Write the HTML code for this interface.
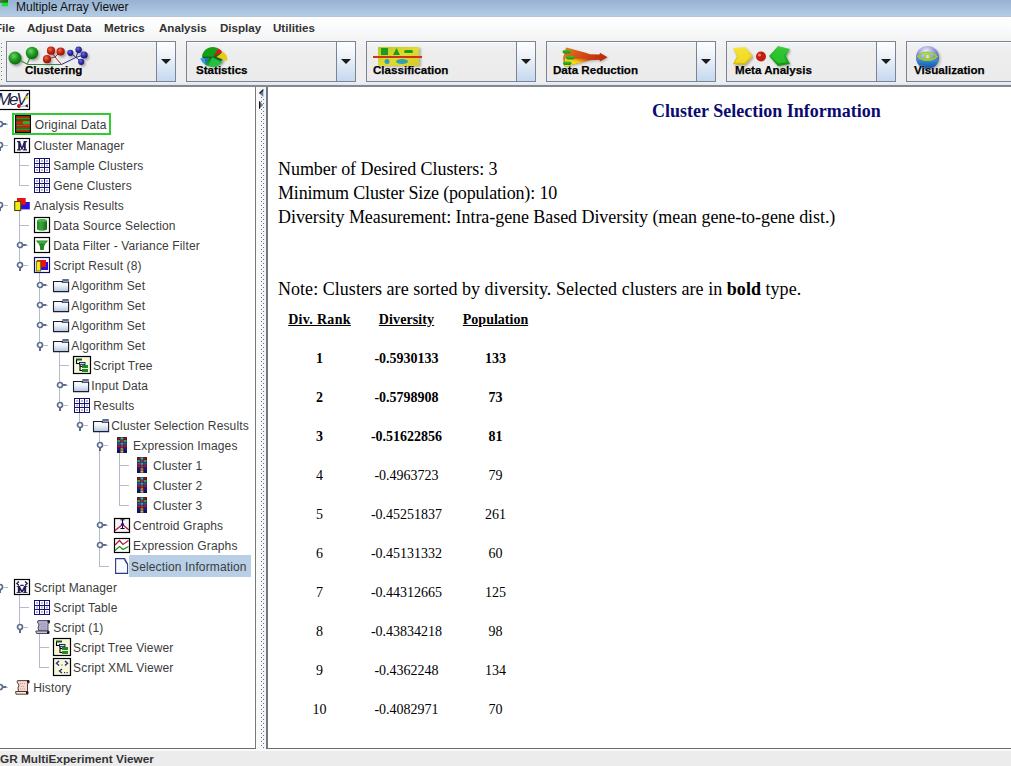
<!DOCTYPE html>
<html><head><meta charset="utf-8"><title>Multiple Array Viewer</title>
<style>
html,body{margin:0;padding:0;width:1011px;height:766px;overflow:hidden;background:#fff;position:relative;font-family:'Liberation Sans',sans-serif}
.t{position:absolute;white-space:pre}
svg{overflow:visible}
</style></head><body>
<div style="position:absolute;left:0px;top:0px;width:1011px;height:17px;background:linear-gradient(#97b2d2,#b5cee6)"></div>
<div style="position:absolute;left:0px;top:16px;width:1011px;height:1px;background:#b8c6d4"></div>
<svg style="position:absolute;left:0px;top:0px;" width="10" height="8" viewBox="0 0 10 8"><defs><linearGradient id="tb" x1="0" x2="1"><stop offset="0" stop-color="#6a6a50"/><stop offset="0.5" stop-color="#207a20"/><stop offset="1" stop-color="#106a20"/></linearGradient></defs><rect x="0" y="0" width="8" height="3" fill="url(#tb)"/><rect x="0" y="2" width="8" height="1" fill="#10a010"/><rect x="2" y="3" width="6" height="3" fill="#18e030"/><rect x="2" y="6" width="6" height="1" fill="#60d880" opacity="0.6"/></svg>
<div class="t" style="left:16px;top:1px;font-family:'Liberation Sans', sans-serif;font-size:12px;line-height:12px;font-weight:normal;color:#101010;">Multiple Array Viewer</div>
<div style="position:absolute;left:0px;top:17px;width:1011px;height:68px;background:linear-gradient(#ffffff 0px,#fafbfc 10px,#f4f4f5 22px,#efeff0 40px,#eeeeee 68px)"></div>
<div class="t" style="left:-5px;top:22px;font-family:'Liberation Sans', sans-serif;font-size:11.6px;line-height:11.6px;font-weight:bold;color:#333;">File</div>
<div class="t" style="left:27px;top:22px;font-family:'Liberation Sans', sans-serif;font-size:11.6px;line-height:11.6px;font-weight:bold;color:#333;">Adjust Data</div>
<div class="t" style="left:104px;top:22px;font-family:'Liberation Sans', sans-serif;font-size:11.6px;line-height:11.6px;font-weight:bold;color:#333;">Metrics</div>
<div class="t" style="left:159px;top:22px;font-family:'Liberation Sans', sans-serif;font-size:11.6px;line-height:11.6px;font-weight:bold;color:#333;">Analysis</div>
<div class="t" style="left:220px;top:22px;font-family:'Liberation Sans', sans-serif;font-size:11.6px;line-height:11.6px;font-weight:bold;color:#333;">Display</div>
<div class="t" style="left:273px;top:22px;font-family:'Liberation Sans', sans-serif;font-size:11.6px;line-height:11.6px;font-weight:bold;color:#333;">Utilities</div>
<div style="position:absolute;left:1px;top:43px;width:1px;height:1px;background:#7d7d7d"></div>
<div style="position:absolute;left:2px;top:44px;width:1px;height:1px;background:#ffffff"></div>
<div style="position:absolute;left:1px;top:47px;width:1px;height:1px;background:#7d7d7d"></div>
<div style="position:absolute;left:2px;top:48px;width:1px;height:1px;background:#ffffff"></div>
<div style="position:absolute;left:1px;top:51px;width:1px;height:1px;background:#7d7d7d"></div>
<div style="position:absolute;left:2px;top:52px;width:1px;height:1px;background:#ffffff"></div>
<div style="position:absolute;left:1px;top:55px;width:1px;height:1px;background:#7d7d7d"></div>
<div style="position:absolute;left:2px;top:56px;width:1px;height:1px;background:#ffffff"></div>
<div style="position:absolute;left:1px;top:59px;width:1px;height:1px;background:#7d7d7d"></div>
<div style="position:absolute;left:2px;top:60px;width:1px;height:1px;background:#ffffff"></div>
<div style="position:absolute;left:1px;top:63px;width:1px;height:1px;background:#7d7d7d"></div>
<div style="position:absolute;left:2px;top:64px;width:1px;height:1px;background:#ffffff"></div>
<div style="position:absolute;left:1px;top:67px;width:1px;height:1px;background:#7d7d7d"></div>
<div style="position:absolute;left:2px;top:68px;width:1px;height:1px;background:#ffffff"></div>
<div style="position:absolute;left:1px;top:71px;width:1px;height:1px;background:#7d7d7d"></div>
<div style="position:absolute;left:2px;top:72px;width:1px;height:1px;background:#ffffff"></div>
<div style="position:absolute;left:1px;top:75px;width:1px;height:1px;background:#7d7d7d"></div>
<div style="position:absolute;left:2px;top:76px;width:1px;height:1px;background:#ffffff"></div>
<div style="position:absolute;left:1px;top:79px;width:1px;height:1px;background:#7d7d7d"></div>
<div style="position:absolute;left:2px;top:80px;width:1px;height:1px;background:#ffffff"></div>
<div style="position:absolute;left:6px;top:41px;width:151px;height:41px;box-sizing:border-box;border:1px solid #7a8494;background:linear-gradient(#f0f3f8,#eeeeef 20%,#ececec 60%,#ebebeb)"></div>
<div style="position:absolute;left:7px;top:42px;width:148px;height:1px;background:#fcfcfd"></div>
<div style="position:absolute;left:156px;top:41px;width:20px;height:41px;box-sizing:border-box;border:1px solid #7a8494;background:linear-gradient(#fdfdfe 0%,#f2f5fa 30%,#d8e5f3 70%,#c4d8ee 100%)"></div>
<svg style="position:absolute;left:161px;top:59px;" width="10" height="5" viewBox="0 0 10 5"><path d="M0 0H10L5 5Z" fill="#1a1a1a"/></svg>
<svg style="position:absolute;left:4px;top:42px;" width="94" height="28" viewBox="0 0 94 28">
<defs>
<radialGradient id="gg" cx="40%" cy="35%" r="65%"><stop offset="0" stop-color="#70d070"/><stop offset="0.5" stop-color="#20a020"/><stop offset="1" stop-color="#0a6a0a"/></radialGradient>
<radialGradient id="rg" cx="40%" cy="35%" r="65%"><stop offset="0" stop-color="#e87050"/><stop offset="0.5" stop-color="#c82810"/><stop offset="1" stop-color="#901008"/></radialGradient>
<radialGradient id="bg" cx="40%" cy="35%" r="65%"><stop offset="0" stop-color="#7070d8"/><stop offset="0.5" stop-color="#3030b0"/><stop offset="1" stop-color="#181878"/></radialGradient>
<filter id="sh" x="-20%" y="-20%" width="140%" height="160%"><feGaussianBlur stdDeviation="1.2"/></filter>
</defs>
<g filter="url(#sh)" opacity="0.3" transform="translate(1.5,2)">
<circle cx="11" cy="16" r="6.5"/><circle cx="28" cy="11" r="6"/><circle cx="47" cy="8.7" r="4"/><circle cx="56.6" cy="9.5" r="4"/><circle cx="43" cy="17.2" r="4"/><circle cx="66.3" cy="10.8" r="3"/><circle cx="74.6" cy="7.7" r="3.2"/><circle cx="80.2" cy="12.9" r="3.5"/><circle cx="77.2" cy="19.8" r="3"/>
</g>
<path d="M11 16 L24 22.5 L57.5 22.5 M28 11 L23.5 21.5" stroke="#3a8a3a" stroke-width="1.1" fill="none"/>
<path d="M47 8.7 L51 15 L57.5 22.5 M56.6 9.5 L51 15 M43 17.2 L51 15" stroke="#a02838" stroke-width="1" fill="none"/>
<path d="M57.5 22.5 L72 15.4 L66.3 10.8 M72 15.4 L74.6 7.7 M72 15.4 L80.2 12.9 M72 15.4 L77.2 19.8" stroke="#2a2a90" stroke-width="1" fill="none"/>
<circle cx="11" cy="16" r="6.5" fill="url(#gg)"/>
<circle cx="28" cy="11" r="6.2" fill="url(#gg)"/>
<circle cx="47" cy="8.7" r="4.1" fill="url(#rg)"/>
<circle cx="56.6" cy="9.5" r="4.1" fill="url(#rg)"/>
<circle cx="43" cy="17.2" r="4.1" fill="url(#rg)"/>
<circle cx="66.3" cy="10.8" r="3.1" fill="url(#bg)"/>
<circle cx="74.6" cy="7.7" r="3.2" fill="url(#bg)"/>
<circle cx="80.2" cy="12.9" r="3.5" fill="url(#bg)"/>
<circle cx="77.2" cy="19.8" r="3.1" fill="url(#bg)"/>
</svg>
<div class="t" style="left:25px;top:64px;font-family:'Liberation Sans', sans-serif;font-size:11.6px;line-height:11.6px;font-weight:bold;color:#000;text-shadow:0 0 1px #fff,0 0 1px #fff;-webkit-text-stroke:0.25px #000">Clustering</div>
<div style="position:absolute;left:186px;top:41px;width:151px;height:41px;box-sizing:border-box;border:1px solid #7a8494;background:linear-gradient(#f0f3f8,#eeeeef 20%,#ececec 60%,#ebebeb)"></div>
<div style="position:absolute;left:187px;top:42px;width:148px;height:1px;background:#fcfcfd"></div>
<div style="position:absolute;left:336px;top:41px;width:20px;height:41px;box-sizing:border-box;border:1px solid #7a8494;background:linear-gradient(#fdfdfe 0%,#f2f5fa 30%,#d8e5f3 70%,#c4d8ee 100%)"></div>
<svg style="position:absolute;left:341px;top:59px;" width="10" height="5" viewBox="0 0 10 5"><path d="M0 0H10L5 5Z" fill="#1a1a1a"/></svg>
<svg style="position:absolute;left:196px;top:44px;" width="36" height="26" viewBox="0 0 36 26">
<defs><filter id="sh2" x="-30%" y="-30%" width="160%" height="160%"><feGaussianBlur stdDeviation="1"/></filter></defs>
<g filter="url(#sh2)" opacity="0.3" transform="translate(1,1.5)"><ellipse cx="17" cy="13" rx="11" ry="9.5"/></g>
<ellipse cx="16.5" cy="13" rx="10.2" ry="9" fill="#0e6a18"/>
<path d="M17 12.5 L6.3 12.5 A10.7 9.5 0 0 1 22.6 4.4 Z" fill="#14a014"/>
<path d="M17.6 12.6 L22.4 4.6 A10.7 9.5 0 0 1 26.3 8 Z" fill="#e01818"/>
<path d="M20.5 13 L27 8 A10.7 9.5 0 0 1 31.4 17 Z" fill="#e8cc10"/>
<path d="M13.2 14.2 L4.3 14.2 A10.7 9.5 0 0 0 9.6 20.7 Z" fill="#30a0e0"/>
<path d="M12.8 14.5 L9.6 20.7 L8.8 14.5Z" fill="#1f6fb0"/>
<path d="M16.2 13.2 L26.4 18.3 A10.7 9.5 0 0 1 11.8 21.8 Z" fill="#22c040"/>
<path d="M16.2 13.2 L11.8 21.8 A10.7 9.5 0 0 1 9 20.5Z" fill="#14a014"/>
</svg>
<div class="t" style="left:196px;top:64px;font-family:'Liberation Sans', sans-serif;font-size:11.6px;line-height:11.6px;font-weight:bold;color:#000;text-shadow:0 0 1px #fff,0 0 1px #fff;-webkit-text-stroke:0.25px #000">Statistics</div>
<div style="position:absolute;left:366px;top:41px;width:151px;height:41px;box-sizing:border-box;border:1px solid #7a8494;background:linear-gradient(#f0f3f8,#eeeeef 20%,#ececec 60%,#ebebeb)"></div>
<div style="position:absolute;left:367px;top:42px;width:148px;height:1px;background:#fcfcfd"></div>
<div style="position:absolute;left:516px;top:41px;width:20px;height:41px;box-sizing:border-box;border:1px solid #7a8494;background:linear-gradient(#fdfdfe 0%,#f2f5fa 30%,#d8e5f3 70%,#c4d8ee 100%)"></div>
<svg style="position:absolute;left:521px;top:59px;" width="10" height="5" viewBox="0 0 10 5"><path d="M0 0H10L5 5Z" fill="#1a1a1a"/></svg>
<svg style="position:absolute;left:371px;top:45px;" width="54" height="23" viewBox="0 0 54 23">
<defs><linearGradient id="yl" x1="0" y1="0" x2="1" y2="1"><stop offset="0" stop-color="#b8c820"/><stop offset="0.5" stop-color="#e0dc30"/><stop offset="1" stop-color="#d8c828"/></linearGradient>
<filter id="sh3"><feGaussianBlur stdDeviation="0.8"/></filter></defs>
<rect x="9" y="3" width="41" height="19" fill="#000" opacity="0.25" filter="url(#sh3)"/>
<rect x="7" y="2" width="41" height="19" fill="url(#yl)"/>
<rect x="10" y="3" width="7" height="7" fill="#1f9a1f"/>
<path d="M22 10 L25.5 3 L29 10Z" fill="#1f9a1f"/>
<rect x="33" y="5" width="9" height="3" rx="1.5" fill="#1f9a1f"/>
<rect x="2" y="11" width="49" height="2" fill="#c83818"/>
<circle cx="16" cy="16.5" r="2.5" fill="#30a0b8"/>
<ellipse cx="31" cy="16.5" rx="6" ry="2.5" fill="#30a0b8"/>
</svg>
<div class="t" style="left:373px;top:64px;font-family:'Liberation Sans', sans-serif;font-size:11.6px;line-height:11.6px;font-weight:bold;color:#000;text-shadow:0 0 1px #fff,0 0 1px #fff;-webkit-text-stroke:0.25px #000">Classification</div>
<div style="position:absolute;left:546px;top:41px;width:151px;height:41px;box-sizing:border-box;border:1px solid #7a8494;background:linear-gradient(#f0f3f8,#eeeeef 20%,#ececec 60%,#ebebeb)"></div>
<div style="position:absolute;left:547px;top:42px;width:148px;height:1px;background:#fcfcfd"></div>
<div style="position:absolute;left:696px;top:41px;width:20px;height:41px;box-sizing:border-box;border:1px solid #7a8494;background:linear-gradient(#fdfdfe 0%,#f2f5fa 30%,#d8e5f3 70%,#c4d8ee 100%)"></div>
<svg style="position:absolute;left:701px;top:59px;" width="10" height="5" viewBox="0 0 10 5"><path d="M0 0H10L5 5Z" fill="#1a1a1a"/></svg>
<svg style="position:absolute;left:560px;top:45px;" width="52" height="24" viewBox="0 0 52 24">
<defs><linearGradient id="dr" x1="0" y1="0" x2="1" y2="0.3"><stop offset="0" stop-color="#d89018"/><stop offset="0.35" stop-color="#d85818"/><stop offset="1" stop-color="#c02808"/></linearGradient>
<linearGradient id="dy" x1="0" y1="1" x2="0.8" y2="0"><stop offset="0" stop-color="#f8f020"/><stop offset="0.6" stop-color="#f0d010"/><stop offset="1" stop-color="#e8a010" stop-opacity="0"/></linearGradient>
<linearGradient id="pg" x1="0" y1="0" x2="0" y2="1"><stop offset="0" stop-color="#40c030"/><stop offset="1" stop-color="#1a8a18"/></linearGradient>
<filter id="sh4"><feGaussianBlur stdDeviation="0.9"/></filter></defs>
<path d="M6 2.5 Q20 6 30 9.2 L39.5 9.5 L40 7.8 L47.5 12.3 L40 16.5 L39.5 14.8 L30 15.2 Q18 18 4.5 22 L3 13Z" fill="#000" opacity="0.22" filter="url(#sh4)" transform="translate(1,1.2)"/>
<path d="M6 2.5 Q20 6 30 9.2 L39.5 9.5 L40 7.8 L47.5 12.3 L40 16.5 L39.5 14.8 L30 15.2 Q18 18 4.5 22 L3 13Z" fill="url(#dr)"/>
<path d="M4.5 22 Q18 18 30 15.2 L26 13.5 Q14 14 5 13Z" fill="url(#dy)"/>
<rect x="2.5" y="5" width="8.5" height="3.6" rx="1.8" fill="url(#pg)"/>
<rect x="6" y="11" width="8.5" height="3.6" rx="1.8" fill="url(#pg)"/>
<rect x="3" y="16.5" width="8.5" height="3.6" rx="1.8" fill="url(#pg)"/>
</svg>
<div class="t" style="left:553px;top:64px;font-family:'Liberation Sans', sans-serif;font-size:11.6px;line-height:11.6px;font-weight:bold;color:#000;text-shadow:0 0 1px #fff,0 0 1px #fff;-webkit-text-stroke:0.25px #000">Data Reduction</div>
<div style="position:absolute;left:726px;top:41px;width:151px;height:41px;box-sizing:border-box;border:1px solid #7a8494;background:linear-gradient(#f0f3f8,#eeeeef 20%,#ececec 60%,#ebebeb)"></div>
<div style="position:absolute;left:727px;top:42px;width:148px;height:1px;background:#fcfcfd"></div>
<div style="position:absolute;left:876px;top:41px;width:20px;height:41px;box-sizing:border-box;border:1px solid #7a8494;background:linear-gradient(#fdfdfe 0%,#f2f5fa 30%,#d8e5f3 70%,#c4d8ee 100%)"></div>
<svg style="position:absolute;left:881px;top:59px;" width="10" height="5" viewBox="0 0 10 5"><path d="M0 0H10L5 5Z" fill="#1a1a1a"/></svg>
<svg style="position:absolute;left:731px;top:44px;" width="62" height="24" viewBox="0 0 62 24">
<defs><filter id="sh5"><feGaussianBlur stdDeviation="0.9"/></filter>
<linearGradient id="ya" x1="0" y1="0" x2="0" y2="1"><stop offset="0" stop-color="#f8e840"/><stop offset="1" stop-color="#d8b808"/></linearGradient>
<linearGradient id="ga" x1="0" y1="0" x2="0" y2="1"><stop offset="0" stop-color="#40d040"/><stop offset="1" stop-color="#109010"/></linearGradient></defs>
<g opacity="0.3" filter="url(#sh5)" transform="translate(1,1.5)"><path d="M2 4 L14 3 L22 12 L14 21 L2 20 L6 12Z"/><path d="M59 5 L47 2 L38 12 L47 22 L59 20 L55 12Z"/></g>
<path d="M2 4 L14 3 L22 12 L14 21 L2 20 L6 12Z" fill="url(#ya)"/>
<path d="M4 5.5 L13.5 5 L19.5 12 L13.5 19 L4 18.5 L7.5 12Z" fill="#f4e030" opacity="0.8"/>
<circle cx="30" cy="12.5" r="5" fill="#c02010"/>
<circle cx="28.5" cy="11" r="1.6" fill="#f08060"/>
<path d="M59 5 L47 2 L38 12 L47 22 L59 20 L55 12Z" fill="url(#ga)"/>
<path d="M56 6.5 L47 4.5 L40.5 12 L47 19.5 L56 18 L52.5 12Z" fill="#30c830" opacity="0.8"/>
</svg>
<div class="t" style="left:735px;top:64px;font-family:'Liberation Sans', sans-serif;font-size:11.6px;line-height:11.6px;font-weight:bold;color:#000;text-shadow:0 0 1px #fff,0 0 1px #fff;-webkit-text-stroke:0.25px #000">Meta Analysis</div>
<div style="position:absolute;left:906px;top:41px;width:201px;height:41px;box-sizing:border-box;border:1px solid #7a8494;background:linear-gradient(#f0f3f8,#eeeeef 20%,#ececec 60%,#ebebeb)"></div>
<div style="position:absolute;left:907px;top:42px;width:198px;height:1px;background:#fcfcfd"></div>
<svg style="position:absolute;left:914px;top:44px;" width="28" height="26" viewBox="0 0 28 26">
<defs><radialGradient id="gl" cx="45%" cy="25%" r="70%"><stop offset="0" stop-color="#f4f4fc"/><stop offset="0.45" stop-color="#a0a0e0"/><stop offset="1" stop-color="#3050b8"/></radialGradient>
<linearGradient id="gb" x1="0" y1="0" x2="0" y2="1"><stop offset="0" stop-color="#3a90e0"/><stop offset="1" stop-color="#1050a0"/></linearGradient>
<filter id="sh6"><feGaussianBlur stdDeviation="1"/></filter></defs>
<circle cx="15" cy="15" r="11.5" fill="#000" opacity="0.25" filter="url(#sh6)"/>
<circle cx="13.5" cy="13.5" r="11.5" fill="url(#gl)"/>
<path d="M2.3 15.5 A11.5 11.5 0 0 0 24.7 15.5 Z" fill="url(#gb)"/>
<path d="M4 12.5 Q13.5 4 23 12.5 Q13.5 20 4 12.5Z" fill="none" stroke="#98d020" stroke-width="1.6"/>
<circle cx="13.5" cy="12.5" r="2.6" fill="#c8d8f0" stroke="#98d020" stroke-width="1.4"/>
</svg>
<div class="t" style="left:914px;top:64px;font-family:'Liberation Sans', sans-serif;font-size:11.6px;line-height:11.6px;font-weight:bold;color:#000;text-shadow:0 0 1px #fff,0 0 1px #fff;-webkit-text-stroke:0.25px #000">Visualization</div>
<div style="position:absolute;left:0px;top:82px;width:1011px;height:3px;background:linear-gradient(#eaf0f6,#dfe6ee)"></div>
<div style="position:absolute;left:0px;top:85px;width:1011px;height:2px;background:#85888c"></div>
<div style="position:absolute;left:0px;top:87px;width:255px;height:661px;background:#fff"></div>
<div style="position:absolute;left:255px;top:87px;width:1px;height:661px;background:#7a7a7a"></div>
<div style="position:absolute;left:0px;top:748px;width:256px;height:1px;background:#6e6e6e"></div>
<div style="position:absolute;left:256px;top:87px;width:10px;height:662px;background:linear-gradient(90deg,#fafafa,#f0f3f8)"></div>
<svg style="position:absolute;left:256px;top:87px;" width="10" height="662" viewBox="0 0 10 662"><rect x="7" y="12" width="1" height="1" fill="#6a6e76"/><rect x="7" y="16" width="1" height="1" fill="#6a6e76"/><rect x="7" y="20" width="1" height="1" fill="#6a6e76"/><rect x="7" y="24" width="1" height="1" fill="#6a6e76"/><rect x="7" y="28" width="1" height="1" fill="#6a6e76"/><rect x="7" y="32" width="1" height="1" fill="#6a6e76"/><rect x="7" y="36" width="1" height="1" fill="#6a6e76"/><rect x="7" y="40" width="1" height="1" fill="#6a6e76"/><rect x="7" y="44" width="1" height="1" fill="#6a6e76"/><rect x="7" y="48" width="1" height="1" fill="#6a6e76"/><rect x="7" y="52" width="1" height="1" fill="#6a6e76"/><rect x="7" y="56" width="1" height="1" fill="#6a6e76"/><rect x="7" y="60" width="1" height="1" fill="#6a6e76"/><rect x="7" y="64" width="1" height="1" fill="#6a6e76"/><rect x="7" y="68" width="1" height="1" fill="#6a6e76"/><rect x="7" y="72" width="1" height="1" fill="#6a6e76"/><rect x="7" y="76" width="1" height="1" fill="#6a6e76"/><rect x="7" y="80" width="1" height="1" fill="#6a6e76"/><rect x="7" y="84" width="1" height="1" fill="#6a6e76"/><rect x="7" y="88" width="1" height="1" fill="#6a6e76"/><rect x="7" y="92" width="1" height="1" fill="#6a6e76"/><rect x="7" y="96" width="1" height="1" fill="#6a6e76"/><rect x="7" y="100" width="1" height="1" fill="#6a6e76"/><rect x="7" y="104" width="1" height="1" fill="#6a6e76"/><rect x="7" y="108" width="1" height="1" fill="#6a6e76"/><rect x="7" y="112" width="1" height="1" fill="#6a6e76"/><rect x="7" y="116" width="1" height="1" fill="#6a6e76"/><rect x="7" y="120" width="1" height="1" fill="#6a6e76"/><rect x="7" y="124" width="1" height="1" fill="#6a6e76"/><rect x="7" y="128" width="1" height="1" fill="#6a6e76"/><rect x="7" y="132" width="1" height="1" fill="#6a6e76"/><rect x="7" y="136" width="1" height="1" fill="#6a6e76"/><rect x="7" y="140" width="1" height="1" fill="#6a6e76"/><rect x="7" y="144" width="1" height="1" fill="#6a6e76"/><rect x="7" y="148" width="1" height="1" fill="#6a6e76"/><rect x="7" y="152" width="1" height="1" fill="#6a6e76"/><rect x="7" y="156" width="1" height="1" fill="#6a6e76"/><rect x="7" y="160" width="1" height="1" fill="#6a6e76"/><rect x="7" y="164" width="1" height="1" fill="#6a6e76"/><rect x="7" y="168" width="1" height="1" fill="#6a6e76"/><rect x="7" y="172" width="1" height="1" fill="#6a6e76"/><rect x="7" y="176" width="1" height="1" fill="#6a6e76"/><rect x="7" y="180" width="1" height="1" fill="#6a6e76"/><rect x="7" y="184" width="1" height="1" fill="#6a6e76"/><rect x="7" y="188" width="1" height="1" fill="#6a6e76"/><rect x="7" y="192" width="1" height="1" fill="#6a6e76"/><rect x="7" y="196" width="1" height="1" fill="#6a6e76"/><rect x="7" y="200" width="1" height="1" fill="#6a6e76"/><rect x="7" y="204" width="1" height="1" fill="#6a6e76"/><rect x="7" y="208" width="1" height="1" fill="#6a6e76"/><rect x="7" y="212" width="1" height="1" fill="#6a6e76"/><rect x="7" y="216" width="1" height="1" fill="#6a6e76"/><rect x="7" y="220" width="1" height="1" fill="#6a6e76"/><rect x="7" y="224" width="1" height="1" fill="#6a6e76"/><rect x="7" y="228" width="1" height="1" fill="#6a6e76"/><rect x="7" y="232" width="1" height="1" fill="#6a6e76"/><rect x="7" y="236" width="1" height="1" fill="#6a6e76"/><rect x="7" y="240" width="1" height="1" fill="#6a6e76"/><rect x="7" y="244" width="1" height="1" fill="#6a6e76"/><rect x="7" y="248" width="1" height="1" fill="#6a6e76"/><rect x="7" y="252" width="1" height="1" fill="#6a6e76"/><rect x="7" y="256" width="1" height="1" fill="#6a6e76"/><rect x="7" y="260" width="1" height="1" fill="#6a6e76"/><rect x="7" y="264" width="1" height="1" fill="#6a6e76"/><rect x="7" y="268" width="1" height="1" fill="#6a6e76"/><rect x="7" y="272" width="1" height="1" fill="#6a6e76"/><rect x="7" y="276" width="1" height="1" fill="#6a6e76"/><rect x="7" y="280" width="1" height="1" fill="#6a6e76"/><rect x="7" y="284" width="1" height="1" fill="#6a6e76"/><rect x="7" y="288" width="1" height="1" fill="#6a6e76"/><rect x="7" y="292" width="1" height="1" fill="#6a6e76"/><rect x="7" y="296" width="1" height="1" fill="#6a6e76"/><rect x="7" y="300" width="1" height="1" fill="#6a6e76"/><rect x="7" y="304" width="1" height="1" fill="#6a6e76"/><rect x="7" y="308" width="1" height="1" fill="#6a6e76"/><rect x="7" y="312" width="1" height="1" fill="#6a6e76"/><rect x="7" y="316" width="1" height="1" fill="#6a6e76"/><rect x="7" y="320" width="1" height="1" fill="#6a6e76"/><rect x="7" y="324" width="1" height="1" fill="#6a6e76"/><rect x="7" y="328" width="1" height="1" fill="#6a6e76"/><rect x="7" y="332" width="1" height="1" fill="#6a6e76"/><rect x="7" y="336" width="1" height="1" fill="#6a6e76"/><rect x="7" y="340" width="1" height="1" fill="#6a6e76"/><rect x="7" y="344" width="1" height="1" fill="#6a6e76"/><rect x="7" y="348" width="1" height="1" fill="#6a6e76"/><rect x="7" y="352" width="1" height="1" fill="#6a6e76"/><rect x="7" y="356" width="1" height="1" fill="#6a6e76"/><rect x="7" y="360" width="1" height="1" fill="#6a6e76"/><rect x="7" y="364" width="1" height="1" fill="#6a6e76"/><rect x="7" y="368" width="1" height="1" fill="#6a6e76"/><rect x="7" y="372" width="1" height="1" fill="#6a6e76"/><rect x="7" y="376" width="1" height="1" fill="#6a6e76"/><rect x="7" y="380" width="1" height="1" fill="#6a6e76"/><rect x="7" y="384" width="1" height="1" fill="#6a6e76"/><rect x="7" y="388" width="1" height="1" fill="#6a6e76"/><rect x="7" y="392" width="1" height="1" fill="#6a6e76"/><rect x="7" y="396" width="1" height="1" fill="#6a6e76"/><rect x="7" y="400" width="1" height="1" fill="#6a6e76"/><rect x="7" y="404" width="1" height="1" fill="#6a6e76"/><rect x="7" y="408" width="1" height="1" fill="#6a6e76"/><rect x="7" y="412" width="1" height="1" fill="#6a6e76"/><rect x="7" y="416" width="1" height="1" fill="#6a6e76"/><rect x="7" y="420" width="1" height="1" fill="#6a6e76"/><rect x="7" y="424" width="1" height="1" fill="#6a6e76"/><rect x="7" y="428" width="1" height="1" fill="#6a6e76"/><rect x="7" y="432" width="1" height="1" fill="#6a6e76"/><rect x="7" y="436" width="1" height="1" fill="#6a6e76"/><rect x="7" y="440" width="1" height="1" fill="#6a6e76"/><rect x="7" y="444" width="1" height="1" fill="#6a6e76"/><rect x="7" y="448" width="1" height="1" fill="#6a6e76"/><rect x="7" y="452" width="1" height="1" fill="#6a6e76"/><rect x="7" y="456" width="1" height="1" fill="#6a6e76"/><rect x="7" y="460" width="1" height="1" fill="#6a6e76"/><rect x="7" y="464" width="1" height="1" fill="#6a6e76"/><rect x="7" y="468" width="1" height="1" fill="#6a6e76"/><rect x="7" y="472" width="1" height="1" fill="#6a6e76"/><rect x="7" y="476" width="1" height="1" fill="#6a6e76"/><rect x="7" y="480" width="1" height="1" fill="#6a6e76"/><rect x="7" y="484" width="1" height="1" fill="#6a6e76"/><rect x="7" y="488" width="1" height="1" fill="#6a6e76"/><rect x="7" y="492" width="1" height="1" fill="#6a6e76"/><rect x="7" y="496" width="1" height="1" fill="#6a6e76"/><rect x="7" y="500" width="1" height="1" fill="#6a6e76"/><rect x="7" y="504" width="1" height="1" fill="#6a6e76"/><rect x="7" y="508" width="1" height="1" fill="#6a6e76"/><rect x="7" y="512" width="1" height="1" fill="#6a6e76"/><rect x="7" y="516" width="1" height="1" fill="#6a6e76"/><rect x="7" y="520" width="1" height="1" fill="#6a6e76"/><rect x="7" y="524" width="1" height="1" fill="#6a6e76"/><rect x="7" y="528" width="1" height="1" fill="#6a6e76"/><rect x="7" y="532" width="1" height="1" fill="#6a6e76"/><rect x="7" y="536" width="1" height="1" fill="#6a6e76"/><rect x="7" y="540" width="1" height="1" fill="#6a6e76"/><rect x="7" y="544" width="1" height="1" fill="#6a6e76"/><rect x="7" y="548" width="1" height="1" fill="#6a6e76"/><rect x="7" y="552" width="1" height="1" fill="#6a6e76"/><rect x="7" y="556" width="1" height="1" fill="#6a6e76"/><rect x="7" y="560" width="1" height="1" fill="#6a6e76"/><rect x="7" y="564" width="1" height="1" fill="#6a6e76"/><rect x="7" y="568" width="1" height="1" fill="#6a6e76"/><rect x="7" y="572" width="1" height="1" fill="#6a6e76"/><rect x="7" y="576" width="1" height="1" fill="#6a6e76"/><rect x="7" y="580" width="1" height="1" fill="#6a6e76"/><rect x="7" y="584" width="1" height="1" fill="#6a6e76"/><rect x="7" y="588" width="1" height="1" fill="#6a6e76"/><rect x="7" y="592" width="1" height="1" fill="#6a6e76"/><rect x="7" y="596" width="1" height="1" fill="#6a6e76"/><rect x="7" y="600" width="1" height="1" fill="#6a6e76"/><rect x="7" y="604" width="1" height="1" fill="#6a6e76"/><rect x="7" y="608" width="1" height="1" fill="#6a6e76"/><rect x="7" y="612" width="1" height="1" fill="#6a6e76"/><rect x="7" y="616" width="1" height="1" fill="#6a6e76"/><rect x="7" y="620" width="1" height="1" fill="#6a6e76"/><rect x="7" y="624" width="1" height="1" fill="#6a6e76"/><rect x="7" y="628" width="1" height="1" fill="#6a6e76"/><rect x="7" y="632" width="1" height="1" fill="#6a6e76"/><rect x="7" y="636" width="1" height="1" fill="#6a6e76"/><rect x="7" y="640" width="1" height="1" fill="#6a6e76"/><rect x="7" y="644" width="1" height="1" fill="#6a6e76"/><rect x="7" y="648" width="1" height="1" fill="#6a6e76"/><rect x="7" y="652" width="1" height="1" fill="#6a6e76"/><rect x="7" y="656" width="1" height="1" fill="#6a6e76"/><rect x="7" y="660" width="1" height="1" fill="#6a6e76"/><rect x="5" y="10" width="1" height="1" fill="#6a6e76"/><rect x="5" y="14" width="1" height="1" fill="#6a6e76"/><rect x="5" y="18" width="1" height="1" fill="#6a6e76"/><rect x="5" y="22" width="1" height="1" fill="#6a6e76"/><rect x="5" y="26" width="1" height="1" fill="#6a6e76"/><rect x="5" y="30" width="1" height="1" fill="#6a6e76"/><rect x="5" y="34" width="1" height="1" fill="#6a6e76"/><rect x="5" y="38" width="1" height="1" fill="#6a6e76"/><rect x="5" y="42" width="1" height="1" fill="#6a6e76"/><rect x="5" y="46" width="1" height="1" fill="#6a6e76"/><rect x="5" y="50" width="1" height="1" fill="#6a6e76"/><rect x="5" y="54" width="1" height="1" fill="#6a6e76"/><rect x="5" y="58" width="1" height="1" fill="#6a6e76"/><rect x="5" y="62" width="1" height="1" fill="#6a6e76"/><rect x="5" y="66" width="1" height="1" fill="#6a6e76"/><rect x="5" y="70" width="1" height="1" fill="#6a6e76"/><rect x="5" y="74" width="1" height="1" fill="#6a6e76"/><rect x="5" y="78" width="1" height="1" fill="#6a6e76"/><rect x="5" y="82" width="1" height="1" fill="#6a6e76"/><rect x="5" y="86" width="1" height="1" fill="#6a6e76"/><rect x="5" y="90" width="1" height="1" fill="#6a6e76"/><rect x="5" y="94" width="1" height="1" fill="#6a6e76"/><rect x="5" y="98" width="1" height="1" fill="#6a6e76"/><rect x="5" y="102" width="1" height="1" fill="#6a6e76"/><rect x="5" y="106" width="1" height="1" fill="#6a6e76"/><rect x="5" y="110" width="1" height="1" fill="#6a6e76"/><rect x="5" y="114" width="1" height="1" fill="#6a6e76"/><rect x="5" y="118" width="1" height="1" fill="#6a6e76"/><rect x="5" y="122" width="1" height="1" fill="#6a6e76"/><rect x="5" y="126" width="1" height="1" fill="#6a6e76"/><rect x="5" y="130" width="1" height="1" fill="#6a6e76"/><rect x="5" y="134" width="1" height="1" fill="#6a6e76"/><rect x="5" y="138" width="1" height="1" fill="#6a6e76"/><rect x="5" y="142" width="1" height="1" fill="#6a6e76"/><rect x="5" y="146" width="1" height="1" fill="#6a6e76"/><rect x="5" y="150" width="1" height="1" fill="#6a6e76"/><rect x="5" y="154" width="1" height="1" fill="#6a6e76"/><rect x="5" y="158" width="1" height="1" fill="#6a6e76"/><rect x="5" y="162" width="1" height="1" fill="#6a6e76"/><rect x="5" y="166" width="1" height="1" fill="#6a6e76"/><rect x="5" y="170" width="1" height="1" fill="#6a6e76"/><rect x="5" y="174" width="1" height="1" fill="#6a6e76"/><rect x="5" y="178" width="1" height="1" fill="#6a6e76"/><rect x="5" y="182" width="1" height="1" fill="#6a6e76"/><rect x="5" y="186" width="1" height="1" fill="#6a6e76"/><rect x="5" y="190" width="1" height="1" fill="#6a6e76"/><rect x="5" y="194" width="1" height="1" fill="#6a6e76"/><rect x="5" y="198" width="1" height="1" fill="#6a6e76"/><rect x="5" y="202" width="1" height="1" fill="#6a6e76"/><rect x="5" y="206" width="1" height="1" fill="#6a6e76"/><rect x="5" y="210" width="1" height="1" fill="#6a6e76"/><rect x="5" y="214" width="1" height="1" fill="#6a6e76"/><rect x="5" y="218" width="1" height="1" fill="#6a6e76"/><rect x="5" y="222" width="1" height="1" fill="#6a6e76"/><rect x="5" y="226" width="1" height="1" fill="#6a6e76"/><rect x="5" y="230" width="1" height="1" fill="#6a6e76"/><rect x="5" y="234" width="1" height="1" fill="#6a6e76"/><rect x="5" y="238" width="1" height="1" fill="#6a6e76"/><rect x="5" y="242" width="1" height="1" fill="#6a6e76"/><rect x="5" y="246" width="1" height="1" fill="#6a6e76"/><rect x="5" y="250" width="1" height="1" fill="#6a6e76"/><rect x="5" y="254" width="1" height="1" fill="#6a6e76"/><rect x="5" y="258" width="1" height="1" fill="#6a6e76"/><rect x="5" y="262" width="1" height="1" fill="#6a6e76"/><rect x="5" y="266" width="1" height="1" fill="#6a6e76"/><rect x="5" y="270" width="1" height="1" fill="#6a6e76"/><rect x="5" y="274" width="1" height="1" fill="#6a6e76"/><rect x="5" y="278" width="1" height="1" fill="#6a6e76"/><rect x="5" y="282" width="1" height="1" fill="#6a6e76"/><rect x="5" y="286" width="1" height="1" fill="#6a6e76"/><rect x="5" y="290" width="1" height="1" fill="#6a6e76"/><rect x="5" y="294" width="1" height="1" fill="#6a6e76"/><rect x="5" y="298" width="1" height="1" fill="#6a6e76"/><rect x="5" y="302" width="1" height="1" fill="#6a6e76"/><rect x="5" y="306" width="1" height="1" fill="#6a6e76"/><rect x="5" y="310" width="1" height="1" fill="#6a6e76"/><rect x="5" y="314" width="1" height="1" fill="#6a6e76"/><rect x="5" y="318" width="1" height="1" fill="#6a6e76"/><rect x="5" y="322" width="1" height="1" fill="#6a6e76"/><rect x="5" y="326" width="1" height="1" fill="#6a6e76"/><rect x="5" y="330" width="1" height="1" fill="#6a6e76"/><rect x="5" y="334" width="1" height="1" fill="#6a6e76"/><rect x="5" y="338" width="1" height="1" fill="#6a6e76"/><rect x="5" y="342" width="1" height="1" fill="#6a6e76"/><rect x="5" y="346" width="1" height="1" fill="#6a6e76"/><rect x="5" y="350" width="1" height="1" fill="#6a6e76"/><rect x="5" y="354" width="1" height="1" fill="#6a6e76"/><rect x="5" y="358" width="1" height="1" fill="#6a6e76"/><rect x="5" y="362" width="1" height="1" fill="#6a6e76"/><rect x="5" y="366" width="1" height="1" fill="#6a6e76"/><rect x="5" y="370" width="1" height="1" fill="#6a6e76"/><rect x="5" y="374" width="1" height="1" fill="#6a6e76"/><rect x="5" y="378" width="1" height="1" fill="#6a6e76"/><rect x="5" y="382" width="1" height="1" fill="#6a6e76"/><rect x="5" y="386" width="1" height="1" fill="#6a6e76"/><rect x="5" y="390" width="1" height="1" fill="#6a6e76"/><rect x="5" y="394" width="1" height="1" fill="#6a6e76"/><rect x="5" y="398" width="1" height="1" fill="#6a6e76"/><rect x="5" y="402" width="1" height="1" fill="#6a6e76"/><rect x="5" y="406" width="1" height="1" fill="#6a6e76"/><rect x="5" y="410" width="1" height="1" fill="#6a6e76"/><rect x="5" y="414" width="1" height="1" fill="#6a6e76"/><rect x="5" y="418" width="1" height="1" fill="#6a6e76"/><rect x="5" y="422" width="1" height="1" fill="#6a6e76"/><rect x="5" y="426" width="1" height="1" fill="#6a6e76"/><rect x="5" y="430" width="1" height="1" fill="#6a6e76"/><rect x="5" y="434" width="1" height="1" fill="#6a6e76"/><rect x="5" y="438" width="1" height="1" fill="#6a6e76"/><rect x="5" y="442" width="1" height="1" fill="#6a6e76"/><rect x="5" y="446" width="1" height="1" fill="#6a6e76"/><rect x="5" y="450" width="1" height="1" fill="#6a6e76"/><rect x="5" y="454" width="1" height="1" fill="#6a6e76"/><rect x="5" y="458" width="1" height="1" fill="#6a6e76"/><rect x="5" y="462" width="1" height="1" fill="#6a6e76"/><rect x="5" y="466" width="1" height="1" fill="#6a6e76"/><rect x="5" y="470" width="1" height="1" fill="#6a6e76"/><rect x="5" y="474" width="1" height="1" fill="#6a6e76"/><rect x="5" y="478" width="1" height="1" fill="#6a6e76"/><rect x="5" y="482" width="1" height="1" fill="#6a6e76"/><rect x="5" y="486" width="1" height="1" fill="#6a6e76"/><rect x="5" y="490" width="1" height="1" fill="#6a6e76"/><rect x="5" y="494" width="1" height="1" fill="#6a6e76"/><rect x="5" y="498" width="1" height="1" fill="#6a6e76"/><rect x="5" y="502" width="1" height="1" fill="#6a6e76"/><rect x="5" y="506" width="1" height="1" fill="#6a6e76"/><rect x="5" y="510" width="1" height="1" fill="#6a6e76"/><rect x="5" y="514" width="1" height="1" fill="#6a6e76"/><rect x="5" y="518" width="1" height="1" fill="#6a6e76"/><rect x="5" y="522" width="1" height="1" fill="#6a6e76"/><rect x="5" y="526" width="1" height="1" fill="#6a6e76"/><rect x="5" y="530" width="1" height="1" fill="#6a6e76"/><rect x="5" y="534" width="1" height="1" fill="#6a6e76"/><rect x="5" y="538" width="1" height="1" fill="#6a6e76"/><rect x="5" y="542" width="1" height="1" fill="#6a6e76"/><rect x="5" y="546" width="1" height="1" fill="#6a6e76"/><rect x="5" y="550" width="1" height="1" fill="#6a6e76"/><rect x="5" y="554" width="1" height="1" fill="#6a6e76"/><rect x="5" y="558" width="1" height="1" fill="#6a6e76"/><rect x="5" y="562" width="1" height="1" fill="#6a6e76"/><rect x="5" y="566" width="1" height="1" fill="#6a6e76"/><rect x="5" y="570" width="1" height="1" fill="#6a6e76"/><rect x="5" y="574" width="1" height="1" fill="#6a6e76"/><rect x="5" y="578" width="1" height="1" fill="#6a6e76"/><rect x="5" y="582" width="1" height="1" fill="#6a6e76"/><rect x="5" y="586" width="1" height="1" fill="#6a6e76"/><rect x="5" y="590" width="1" height="1" fill="#6a6e76"/><rect x="5" y="594" width="1" height="1" fill="#6a6e76"/><rect x="5" y="598" width="1" height="1" fill="#6a6e76"/><rect x="5" y="602" width="1" height="1" fill="#6a6e76"/><rect x="5" y="606" width="1" height="1" fill="#6a6e76"/><rect x="5" y="610" width="1" height="1" fill="#6a6e76"/><rect x="5" y="614" width="1" height="1" fill="#6a6e76"/><rect x="5" y="618" width="1" height="1" fill="#6a6e76"/><rect x="5" y="622" width="1" height="1" fill="#6a6e76"/><rect x="5" y="626" width="1" height="1" fill="#6a6e76"/><rect x="5" y="630" width="1" height="1" fill="#6a6e76"/><rect x="5" y="634" width="1" height="1" fill="#6a6e76"/><rect x="5" y="638" width="1" height="1" fill="#6a6e76"/><rect x="5" y="642" width="1" height="1" fill="#6a6e76"/><rect x="5" y="646" width="1" height="1" fill="#6a6e76"/><rect x="5" y="650" width="1" height="1" fill="#6a6e76"/><rect x="5" y="654" width="1" height="1" fill="#6a6e76"/><rect x="5" y="658" width="1" height="1" fill="#6a6e76"/><rect x="3" y="0" width="6" height="10" fill="#f2f4f8"/><path d="M7.3 2 L3 6 L7.3 10Z" fill="#6a7a98"/><path d="M7.3 2 L3 6 L4 6.8 L7.3 3.5Z" fill="#111"/><path d="M3 14 L7.3 18 L3 22Z" fill="#6a7a98"/><path d="M3 14 L4.2 15 L4.2 21 L3 22Z" fill="#111"/></svg>
<div style="position:absolute;left:266px;top:87px;width:745px;height:661px;background:#fff"></div>
<div style="position:absolute;left:266px;top:87px;width:2px;height:662px;background:#74777c"></div>
<div style="position:absolute;left:266px;top:748px;width:745px;height:1px;background:#6e6e6e"></div>
<div style="position:absolute;left:0px;top:749px;width:1011px;height:17px;background:#ececec"></div>
<div style="position:absolute;left:0px;top:749px;width:1011px;height:2px;background:#fafafa"></div>
<div class="t" style="left:0px;top:754px;font-family:'Liberation Sans', sans-serif;font-size:11.8px;line-height:11.8px;font-weight:bold;color:#333;">GR MultiExperiment Viewer</div>
<div style="position:absolute;left:129px;top:555px;width:122px;height:22px;background:#b8cfe6"></div>
<div style="position:absolute;left:12px;top:113px;width:99px;height:22px;box-sizing:border-box;border:2px solid #30cc30"></div>
<div style="position:absolute;left:19px;top:151px;width:1px;height:35px;background:#b4bccb"></div>
<div style="position:absolute;left:20px;top:165px;width:9px;height:1px;background:#b4bccb"></div>
<div style="position:absolute;left:20px;top:185px;width:9px;height:1px;background:#b4bccb"></div>
<div style="position:absolute;left:19px;top:211px;width:1px;height:55px;background:#b4bccb"></div>
<div style="position:absolute;left:20px;top:225px;width:9px;height:1px;background:#b4bccb"></div>
<div style="position:absolute;left:39px;top:271px;width:1px;height:75px;background:#b4bccb"></div>
<div style="position:absolute;left:59px;top:351px;width:1px;height:55px;background:#b4bccb"></div>
<div style="position:absolute;left:60px;top:365px;width:9px;height:1px;background:#b4bccb"></div>
<div style="position:absolute;left:79px;top:411px;width:1px;height:15px;background:#b4bccb"></div>
<div style="position:absolute;left:99px;top:431px;width:1px;height:136px;background:#b4bccb"></div>
<div style="position:absolute;left:119px;top:451px;width:1px;height:55px;background:#b4bccb"></div>
<div style="position:absolute;left:120px;top:465px;width:9px;height:1px;background:#b4bccb"></div>
<div style="position:absolute;left:120px;top:485px;width:9px;height:1px;background:#b4bccb"></div>
<div style="position:absolute;left:120px;top:505px;width:9px;height:1px;background:#b4bccb"></div>
<div style="position:absolute;left:100px;top:566px;width:9px;height:1px;background:#b4bccb"></div>
<div style="position:absolute;left:19px;top:593px;width:1px;height:35px;background:#b4bccb"></div>
<div style="position:absolute;left:20px;top:607px;width:9px;height:1px;background:#b4bccb"></div>
<div style="position:absolute;left:39px;top:633px;width:1px;height:35px;background:#b4bccb"></div>
<div style="position:absolute;left:40px;top:647px;width:9px;height:1px;background:#b4bccb"></div>
<div style="position:absolute;left:40px;top:667px;width:9px;height:1px;background:#b4bccb"></div>
<svg style="position:absolute;left:-5.5px;top:119px;" width="14" height="12" viewBox="0 0 14 12"><circle cx="5" cy="5" r="2.5" fill="#fff" stroke="#5c6c8c" stroke-width="1.7"/><rect x="7.5" y="4" width="4" height="2" fill="#5c6c8c"/><path d="M11.5 5.5 H13" stroke="#b4bccb" stroke-width="1"/></svg>
<svg style="position:absolute;left:15px;top:115px;" width="16" height="18" viewBox="0 0 16 18"><rect x="0" y="0" width="16" height="18" fill="#0a0a0a"/><rect x="1.2" y="1.20" width="13.6" height="1.75" fill="#d42010"/><rect x="1.2" y="2.93" width="13.6" height="1.75" fill="#1f9a20"/><rect x="1.2" y="4.66" width="13.6" height="1.75" fill="#c01808"/><rect x="1.2" y="6.39" width="13.6" height="1.75" fill="#229c22"/><rect x="1.2" y="8.12" width="13.6" height="1.75" fill="#d02010"/><rect x="1.2" y="9.85" width="13.6" height="1.75" fill="#22a022"/><rect x="1.2" y="11.58" width="13.6" height="1.75" fill="#c82010"/><rect x="1.2" y="13.31" width="13.6" height="1.75" fill="#1f9a20"/><rect x="1.2" y="15.04" width="13.6" height="1.75" fill="#d02010"/><rect x="8" y="6" width="6.8" height="3.5" fill="#28b028"/><rect x="1.2" y="7" width="6" height="1.8" fill="#d02010" opacity="0.9"/><rect x="8" y="9.5" width="6.8" height="1.8" fill="#e02818"/></svg>
<div class="t" style="left:34.7px;top:119px;font-family:'Liberation Sans', sans-serif;font-size:12px;line-height:12px;font-weight:normal;color:#3c3c3c;letter-spacing:0.14px">Original Data</div>
<svg style="position:absolute;left:-5.5px;top:140px;" width="14" height="12" viewBox="0 0 14 12"><circle cx="5" cy="5" r="2.5" fill="#fff" stroke="#5c6c8c" stroke-width="1.7"/><rect x="4" y="7.5" width="2" height="3.5" fill="#5c6c8c"/><path d="M8 5.5 H13" stroke="#b4bccb" stroke-width="1"/></svg>
<svg style="position:absolute;left:14px;top:138px;" width="16" height="15" viewBox="0 0 16 15"><rect x="0.5" y="0.5" width="15" height="14" fill="#fff" stroke="#000" stroke-width="1.2"/><path transform="translate(3,3) scale(1.0,0.95)" d="M1.2 0.6 H3 V9.4 H1.2Z M7 0.6 H8.8 V9.4 H7Z M1.2 0.6 H3.2 L5 6.2 L6.8 0.6 H8.8 L5.6 9.2 H4.4Z M0 0 H3.4 V1.2 H0Z M6.6 0 H10 V1.2 H6.6Z M0 8.8 H4 V10 H0Z M6 8.8 H10 V10 H6Z" fill="#2a1f5a"/></svg>
<div class="t" style="left:33.7px;top:140px;font-family:'Liberation Sans', sans-serif;font-size:12px;line-height:12px;font-weight:normal;color:#3c3c3c;letter-spacing:0.14px">Cluster Manager</div>
<svg style="position:absolute;left:34px;top:158px;" width="16" height="15" viewBox="0 0 16 15"><rect x="0" y="0" width="16" height="15" fill="#14146e"/><rect x="1" y="1" width="4" height="4" fill="#fff"/><rect x="2" y="2.0" width="2" height="2" fill="#b4b4e4"/><rect x="1" y="6" width="4" height="3" fill="#fff"/><rect x="2" y="6.5" width="2" height="2" fill="#b4b4e4"/><rect x="1" y="10" width="4" height="4" fill="#fff"/><rect x="2" y="11.0" width="2" height="2" fill="#b4b4e4"/><rect x="6" y="1" width="4" height="4" fill="#fff"/><rect x="7" y="2.0" width="2" height="2" fill="#b4b4e4"/><rect x="6" y="6" width="4" height="3" fill="#fff"/><rect x="7" y="6.5" width="2" height="2" fill="#b4b4e4"/><rect x="6" y="10" width="4" height="4" fill="#fff"/><rect x="7" y="11.0" width="2" height="2" fill="#b4b4e4"/><rect x="11" y="1" width="4" height="4" fill="#fff"/><rect x="12" y="2.0" width="2" height="2" fill="#b4b4e4"/><rect x="11" y="6" width="4" height="3" fill="#fff"/><rect x="12" y="6.5" width="2" height="2" fill="#b4b4e4"/><rect x="11" y="10" width="4" height="4" fill="#fff"/><rect x="12" y="11.0" width="2" height="2" fill="#b4b4e4"/></svg>
<div class="t" style="left:53.300000000000004px;top:160px;font-family:'Liberation Sans', sans-serif;font-size:12px;line-height:12px;font-weight:normal;color:#3c3c3c;letter-spacing:0.14px">Sample Clusters</div>
<svg style="position:absolute;left:34px;top:178px;" width="16" height="15" viewBox="0 0 16 15"><rect x="0" y="0" width="16" height="15" fill="#14146e"/><rect x="1" y="1" width="4" height="4" fill="#fff"/><rect x="2" y="2.0" width="2" height="2" fill="#b4b4e4"/><rect x="1" y="6" width="4" height="3" fill="#fff"/><rect x="2" y="6.5" width="2" height="2" fill="#b4b4e4"/><rect x="1" y="10" width="4" height="4" fill="#fff"/><rect x="2" y="11.0" width="2" height="2" fill="#b4b4e4"/><rect x="6" y="1" width="4" height="4" fill="#fff"/><rect x="7" y="2.0" width="2" height="2" fill="#b4b4e4"/><rect x="6" y="6" width="4" height="3" fill="#fff"/><rect x="7" y="6.5" width="2" height="2" fill="#b4b4e4"/><rect x="6" y="10" width="4" height="4" fill="#fff"/><rect x="7" y="11.0" width="2" height="2" fill="#b4b4e4"/><rect x="11" y="1" width="4" height="4" fill="#fff"/><rect x="12" y="2.0" width="2" height="2" fill="#b4b4e4"/><rect x="11" y="6" width="4" height="3" fill="#fff"/><rect x="12" y="6.5" width="2" height="2" fill="#b4b4e4"/><rect x="11" y="10" width="4" height="4" fill="#fff"/><rect x="12" y="11.0" width="2" height="2" fill="#b4b4e4"/></svg>
<div class="t" style="left:53.300000000000004px;top:180px;font-family:'Liberation Sans', sans-serif;font-size:12px;line-height:12px;font-weight:normal;color:#3c3c3c;letter-spacing:0.14px">Gene Clusters</div>
<svg style="position:absolute;left:-5.5px;top:200px;" width="14" height="12" viewBox="0 0 14 12"><circle cx="5" cy="5" r="2.5" fill="#fff" stroke="#5c6c8c" stroke-width="1.7"/><rect x="4" y="7.5" width="2" height="3.5" fill="#5c6c8c"/><path d="M8 5.5 H13" stroke="#b4bccb" stroke-width="1"/></svg>
<svg style="position:absolute;left:14px;top:197px;" width="17" height="15" viewBox="0 0 17 15"><rect x="6.7" y="5" width="9.1" height="7.4" fill="#2a10e0"/><rect x="3" y="1" width="8.7" height="6.7" fill="#ee1010"/><rect x="0.7" y="4.5" width="6" height="9" fill="#f4ec10" stroke="#4a4a10" stroke-width="1.1"/></svg>
<div class="t" style="left:33.7px;top:200px;font-family:'Liberation Sans', sans-serif;font-size:12px;line-height:12px;font-weight:normal;color:#3c3c3c;letter-spacing:0.14px">Analysis Results</div>
<svg style="position:absolute;left:34px;top:217px;" width="16" height="16" viewBox="0 0 16 16"><rect x="0.5" y="0.5" width="15" height="15" fill="#fff" stroke="#000" stroke-width="1.2"/><defs><linearGradient id="cyl" x1="0" x2="1"><stop offset="0" stop-color="#1f8a1f"/><stop offset="0.4" stop-color="#3aa83a"/><stop offset="1" stop-color="#186818"/></linearGradient></defs><path d="M3 3.5 Q8 1.2 13 3.5 V12.5 Q8 15 3 12.5Z" fill="url(#cyl)"/><ellipse cx="8" cy="3.6" rx="5" ry="1.6" fill="#48b048"/></svg>
<div class="t" style="left:53.300000000000004px;top:220px;font-family:'Liberation Sans', sans-serif;font-size:12px;line-height:12px;font-weight:normal;color:#3c3c3c;letter-spacing:0.14px">Data Source Selection</div>
<svg style="position:absolute;left:14.5px;top:240px;" width="14" height="12" viewBox="0 0 14 12"><circle cx="5" cy="5" r="2.5" fill="#fff" stroke="#5c6c8c" stroke-width="1.7"/><rect x="7.5" y="4" width="4" height="2" fill="#5c6c8c"/><path d="M11.5 5.5 H13" stroke="#b4bccb" stroke-width="1"/></svg>
<svg style="position:absolute;left:34px;top:237px;" width="16" height="16" viewBox="0 0 16 16"><rect x="0.5" y="0.5" width="15" height="15" fill="#fff" stroke="#000" stroke-width="1.2"/><path d="M2.2 3.5 H13.8 L12.8 5.5 L11.8 6 L10.2 9 L9.8 13 H6.2 L5.8 9 L4.2 6 L3.2 5.5Z" fill="#228822"/><path d="M4 4.3 H12 L10.8 6.5 H5.2Z" fill="#44b044"/></svg>
<div class="t" style="left:53.300000000000004px;top:240px;font-family:'Liberation Sans', sans-serif;font-size:12px;line-height:12px;font-weight:normal;color:#3c3c3c;letter-spacing:0.14px">Data Filter - Variance Filter</div>
<svg style="position:absolute;left:14.5px;top:260px;" width="14" height="12" viewBox="0 0 14 12"><circle cx="5" cy="5" r="2.5" fill="#fff" stroke="#5c6c8c" stroke-width="1.7"/><rect x="4" y="7.5" width="2" height="3.5" fill="#5c6c8c"/><path d="M8 5.5 H13" stroke="#b4bccb" stroke-width="1"/></svg>
<svg style="position:absolute;left:34px;top:257px;" width="16" height="16" viewBox="0 0 16 16"><rect x="0.5" y="0.5" width="15" height="15" fill="#fff" stroke="#0c0c5a" stroke-width="1.2"/><rect x="7" y="5" width="7" height="8" fill="#2a10e0"/><rect x="3" y="3" width="9" height="7" fill="#ee1010"/><rect x="2.3" y="4.3" width="4.4" height="9.7" fill="#f4ec10" stroke="#5a5a10" stroke-width="0.8"/></svg>
<div class="t" style="left:53.300000000000004px;top:260px;font-family:'Liberation Sans', sans-serif;font-size:12px;line-height:12px;font-weight:normal;color:#3c3c3c;letter-spacing:0.14px">Script Result (8)</div>
<svg style="position:absolute;left:34.5px;top:280px;" width="14" height="12" viewBox="0 0 14 12"><circle cx="5" cy="5" r="2.5" fill="#fff" stroke="#5c6c8c" stroke-width="1.7"/><rect x="7.5" y="4" width="4" height="2" fill="#5c6c8c"/><path d="M11.5 5.5 H13" stroke="#b4bccb" stroke-width="1"/></svg>
<svg style="position:absolute;left:52px;top:277px;" width="18" height="16" viewBox="0 0 18 16"><defs><linearGradient id="fd" x1="0" y1="0" x2="0" y2="1"><stop offset="0" stop-color="#ffffff"/><stop offset="0.4" stop-color="#eef2f8"/><stop offset="1" stop-color="#aec4de"/></linearGradient></defs><path d="M10.3 2 H16.8 V5 H10.3Z" fill="#5f708a"/><rect x="10.8" y="4" width="5.5" height="1" fill="#c0cce0"/><path d="M1.5 4.5 H10.3 V5.2 H16.6 V14.6 H1.5Z" fill="url(#fd)" stroke="#1a2030" stroke-width="1.1"/></svg>
<div class="t" style="left:71.3px;top:280px;font-family:'Liberation Sans', sans-serif;font-size:12px;line-height:12px;font-weight:normal;color:#3c3c3c;letter-spacing:0.14px">Algorithm Set</div>
<svg style="position:absolute;left:34.5px;top:300px;" width="14" height="12" viewBox="0 0 14 12"><circle cx="5" cy="5" r="2.5" fill="#fff" stroke="#5c6c8c" stroke-width="1.7"/><rect x="7.5" y="4" width="4" height="2" fill="#5c6c8c"/><path d="M11.5 5.5 H13" stroke="#b4bccb" stroke-width="1"/></svg>
<svg style="position:absolute;left:52px;top:297px;" width="18" height="16" viewBox="0 0 18 16"><defs><linearGradient id="fd" x1="0" y1="0" x2="0" y2="1"><stop offset="0" stop-color="#ffffff"/><stop offset="0.4" stop-color="#eef2f8"/><stop offset="1" stop-color="#aec4de"/></linearGradient></defs><path d="M10.3 2 H16.8 V5 H10.3Z" fill="#5f708a"/><rect x="10.8" y="4" width="5.5" height="1" fill="#c0cce0"/><path d="M1.5 4.5 H10.3 V5.2 H16.6 V14.6 H1.5Z" fill="url(#fd)" stroke="#1a2030" stroke-width="1.1"/></svg>
<div class="t" style="left:71.3px;top:300px;font-family:'Liberation Sans', sans-serif;font-size:12px;line-height:12px;font-weight:normal;color:#3c3c3c;letter-spacing:0.14px">Algorithm Set</div>
<svg style="position:absolute;left:34.5px;top:320px;" width="14" height="12" viewBox="0 0 14 12"><circle cx="5" cy="5" r="2.5" fill="#fff" stroke="#5c6c8c" stroke-width="1.7"/><rect x="7.5" y="4" width="4" height="2" fill="#5c6c8c"/><path d="M11.5 5.5 H13" stroke="#b4bccb" stroke-width="1"/></svg>
<svg style="position:absolute;left:52px;top:317px;" width="18" height="16" viewBox="0 0 18 16"><defs><linearGradient id="fd" x1="0" y1="0" x2="0" y2="1"><stop offset="0" stop-color="#ffffff"/><stop offset="0.4" stop-color="#eef2f8"/><stop offset="1" stop-color="#aec4de"/></linearGradient></defs><path d="M10.3 2 H16.8 V5 H10.3Z" fill="#5f708a"/><rect x="10.8" y="4" width="5.5" height="1" fill="#c0cce0"/><path d="M1.5 4.5 H10.3 V5.2 H16.6 V14.6 H1.5Z" fill="url(#fd)" stroke="#1a2030" stroke-width="1.1"/></svg>
<div class="t" style="left:71.3px;top:320px;font-family:'Liberation Sans', sans-serif;font-size:12px;line-height:12px;font-weight:normal;color:#3c3c3c;letter-spacing:0.14px">Algorithm Set</div>
<svg style="position:absolute;left:34.5px;top:340px;" width="14" height="12" viewBox="0 0 14 12"><circle cx="5" cy="5" r="2.5" fill="#fff" stroke="#5c6c8c" stroke-width="1.7"/><rect x="4" y="7.5" width="2" height="3.5" fill="#5c6c8c"/><path d="M8 5.5 H13" stroke="#b4bccb" stroke-width="1"/></svg>
<svg style="position:absolute;left:52px;top:337px;" width="18" height="16" viewBox="0 0 18 16"><defs><linearGradient id="fd" x1="0" y1="0" x2="0" y2="1"><stop offset="0" stop-color="#ffffff"/><stop offset="0.4" stop-color="#eef2f8"/><stop offset="1" stop-color="#aec4de"/></linearGradient></defs><path d="M10.3 2 H16.8 V5 H10.3Z" fill="#5f708a"/><rect x="10.8" y="4" width="5.5" height="1" fill="#c0cce0"/><path d="M1.5 4.5 H10.3 V5.2 H16.6 V14.6 H1.5Z" fill="url(#fd)" stroke="#1a2030" stroke-width="1.1"/></svg>
<div class="t" style="left:71.3px;top:340px;font-family:'Liberation Sans', sans-serif;font-size:12px;line-height:12px;font-weight:normal;color:#3c3c3c;letter-spacing:0.14px">Algorithm Set</div>
<svg style="position:absolute;left:73px;top:356px;" width="18" height="18" viewBox="0 0 18 18"><rect x="0.5" y="0.5" width="17" height="17" fill="#f6f8d8" stroke="#000" stroke-width="1.2"/><rect x="3" y="2.5" width="6" height="2" fill="#1a5a1a"/><path d="M3.5 4 V7.5 H7 V14.5 H9" stroke="#000" stroke-width="1.1" fill="none"/><rect x="6.5" y="6.5" width="5.5" height="2.2" fill="#d0d8f4" stroke="#10105a" stroke-width="0.9"/><path d="M7 10.5 H9" stroke="#000" stroke-width="1.1"/><rect x="9" y="9" width="6" height="3" fill="#1f8a1f"/><rect x="9" y="13" width="6" height="3" fill="#1f8a1f"/></svg>
<div class="t" style="left:93.10000000000001px;top:360px;font-family:'Liberation Sans', sans-serif;font-size:12px;line-height:12px;font-weight:normal;color:#3c3c3c;letter-spacing:0.14px">Script Tree</div>
<svg style="position:absolute;left:54.5px;top:380px;" width="14" height="12" viewBox="0 0 14 12"><circle cx="5" cy="5" r="2.5" fill="#fff" stroke="#5c6c8c" stroke-width="1.7"/><rect x="7.5" y="4" width="4" height="2" fill="#5c6c8c"/><path d="M11.5 5.5 H13" stroke="#b4bccb" stroke-width="1"/></svg>
<svg style="position:absolute;left:72px;top:377px;" width="18" height="16" viewBox="0 0 18 16"><defs><linearGradient id="fd" x1="0" y1="0" x2="0" y2="1"><stop offset="0" stop-color="#ffffff"/><stop offset="0.4" stop-color="#eef2f8"/><stop offset="1" stop-color="#aec4de"/></linearGradient></defs><path d="M10.3 2 H16.8 V5 H10.3Z" fill="#5f708a"/><rect x="10.8" y="4" width="5.5" height="1" fill="#c0cce0"/><path d="M1.5 4.5 H10.3 V5.2 H16.6 V14.6 H1.5Z" fill="url(#fd)" stroke="#1a2030" stroke-width="1.1"/></svg>
<div class="t" style="left:91.3px;top:380px;font-family:'Liberation Sans', sans-serif;font-size:12px;line-height:12px;font-weight:normal;color:#3c3c3c;letter-spacing:0.14px">Input Data</div>
<svg style="position:absolute;left:54.5px;top:400px;" width="14" height="12" viewBox="0 0 14 12"><circle cx="5" cy="5" r="2.5" fill="#fff" stroke="#5c6c8c" stroke-width="1.7"/><rect x="4" y="7.5" width="2" height="3.5" fill="#5c6c8c"/><path d="M8 5.5 H13" stroke="#b4bccb" stroke-width="1"/></svg>
<svg style="position:absolute;left:74px;top:398px;" width="16" height="15" viewBox="0 0 16 15"><rect x="0" y="0" width="16" height="15" fill="#14146e"/><rect x="1" y="1" width="4" height="4" fill="#fff"/><rect x="2" y="2.0" width="2" height="2" fill="#b4b4e4"/><rect x="1" y="6" width="4" height="3" fill="#fff"/><rect x="2" y="6.5" width="2" height="2" fill="#b4b4e4"/><rect x="1" y="10" width="4" height="4" fill="#fff"/><rect x="2" y="11.0" width="2" height="2" fill="#b4b4e4"/><rect x="6" y="1" width="4" height="4" fill="#fff"/><rect x="7" y="2.0" width="2" height="2" fill="#b4b4e4"/><rect x="6" y="6" width="4" height="3" fill="#fff"/><rect x="7" y="6.5" width="2" height="2" fill="#b4b4e4"/><rect x="6" y="10" width="4" height="4" fill="#fff"/><rect x="7" y="11.0" width="2" height="2" fill="#b4b4e4"/><rect x="11" y="1" width="4" height="4" fill="#fff"/><rect x="12" y="2.0" width="2" height="2" fill="#b4b4e4"/><rect x="11" y="6" width="4" height="3" fill="#fff"/><rect x="12" y="6.5" width="2" height="2" fill="#b4b4e4"/><rect x="11" y="10" width="4" height="4" fill="#fff"/><rect x="12" y="11.0" width="2" height="2" fill="#b4b4e4"/></svg>
<div class="t" style="left:93.3px;top:400px;font-family:'Liberation Sans', sans-serif;font-size:12px;line-height:12px;font-weight:normal;color:#3c3c3c;letter-spacing:0.14px">Results</div>
<svg style="position:absolute;left:74.5px;top:420px;" width="14" height="12" viewBox="0 0 14 12"><circle cx="5" cy="5" r="2.5" fill="#fff" stroke="#5c6c8c" stroke-width="1.7"/><rect x="4" y="7.5" width="2" height="3.5" fill="#5c6c8c"/><path d="M8 5.5 H13" stroke="#b4bccb" stroke-width="1"/></svg>
<svg style="position:absolute;left:92px;top:417px;" width="18" height="16" viewBox="0 0 18 16"><defs><linearGradient id="fd" x1="0" y1="0" x2="0" y2="1"><stop offset="0" stop-color="#ffffff"/><stop offset="0.4" stop-color="#eef2f8"/><stop offset="1" stop-color="#aec4de"/></linearGradient></defs><path d="M10.3 2 H16.8 V5 H10.3Z" fill="#5f708a"/><rect x="10.8" y="4" width="5.5" height="1" fill="#c0cce0"/><path d="M1.5 4.5 H10.3 V5.2 H16.6 V14.6 H1.5Z" fill="url(#fd)" stroke="#1a2030" stroke-width="1.1"/></svg>
<div class="t" style="left:111.3px;top:420px;font-family:'Liberation Sans', sans-serif;font-size:12px;line-height:12px;font-weight:normal;color:#3c3c3c;letter-spacing:0.14px">Cluster Selection Results</div>
<svg style="position:absolute;left:94.5px;top:440px;" width="14" height="12" viewBox="0 0 14 12"><circle cx="5" cy="5" r="2.5" fill="#fff" stroke="#5c6c8c" stroke-width="1.7"/><rect x="4" y="7.5" width="2" height="3.5" fill="#5c6c8c"/><path d="M8 5.5 H13" stroke="#b4bccb" stroke-width="1"/></svg>
<svg style="position:absolute;left:117px;top:437px;" width="10" height="16" viewBox="0 0 10 16"><rect x="0" y="0" width="10" height="16" fill="#181838"/><rect x="0.30" y="0.40" width="2.9" height="2.2" fill="#901818"/><rect x="3.50" y="0.40" width="2.9" height="2.2" fill="#40b0b0"/><rect x="6.70" y="0.40" width="2.9" height="2.2" fill="#901818"/><rect x="0.30" y="3.00" width="2.9" height="2.2" fill="#40a040"/><rect x="3.50" y="3.00" width="2.9" height="2.2" fill="#b02040"/><rect x="6.70" y="3.00" width="2.9" height="2.2" fill="#40a040"/><rect x="0.30" y="5.60" width="2.9" height="2.2" fill="#2858b8"/><rect x="3.50" y="5.60" width="2.9" height="2.2" fill="#30a0c8"/><rect x="6.70" y="5.60" width="2.9" height="2.2" fill="#2858b8"/><rect x="0.30" y="8.20" width="2.9" height="2.2" fill="#b01828"/><rect x="3.50" y="8.20" width="2.9" height="2.2" fill="#c82838"/><rect x="6.70" y="8.20" width="2.9" height="2.2" fill="#b01828"/><rect x="0.30" y="10.80" width="2.9" height="2.2" fill="#1a1a90"/><rect x="3.50" y="10.80" width="2.9" height="2.2" fill="#a08030"/><rect x="6.70" y="10.80" width="2.9" height="2.2" fill="#1a1a90"/><rect x="0.30" y="13.40" width="2.9" height="2.2" fill="#101070"/><rect x="3.50" y="13.40" width="2.9" height="2.2" fill="#d0b070"/><rect x="6.70" y="13.40" width="2.9" height="2.2" fill="#101070"/></svg>
<div class="t" style="left:133.1px;top:440px;font-family:'Liberation Sans', sans-serif;font-size:12px;line-height:12px;font-weight:normal;color:#3c3c3c;letter-spacing:0.14px">Expression Images</div>
<svg style="position:absolute;left:137px;top:457px;" width="10" height="16" viewBox="0 0 10 16"><rect x="0" y="0" width="10" height="16" fill="#181838"/><rect x="0.30" y="0.40" width="2.9" height="2.2" fill="#901818"/><rect x="3.50" y="0.40" width="2.9" height="2.2" fill="#40b0b0"/><rect x="6.70" y="0.40" width="2.9" height="2.2" fill="#901818"/><rect x="0.30" y="3.00" width="2.9" height="2.2" fill="#40a040"/><rect x="3.50" y="3.00" width="2.9" height="2.2" fill="#b02040"/><rect x="6.70" y="3.00" width="2.9" height="2.2" fill="#40a040"/><rect x="0.30" y="5.60" width="2.9" height="2.2" fill="#2858b8"/><rect x="3.50" y="5.60" width="2.9" height="2.2" fill="#30a0c8"/><rect x="6.70" y="5.60" width="2.9" height="2.2" fill="#2858b8"/><rect x="0.30" y="8.20" width="2.9" height="2.2" fill="#b01828"/><rect x="3.50" y="8.20" width="2.9" height="2.2" fill="#c82838"/><rect x="6.70" y="8.20" width="2.9" height="2.2" fill="#b01828"/><rect x="0.30" y="10.80" width="2.9" height="2.2" fill="#1a1a90"/><rect x="3.50" y="10.80" width="2.9" height="2.2" fill="#a08030"/><rect x="6.70" y="10.80" width="2.9" height="2.2" fill="#1a1a90"/><rect x="0.30" y="13.40" width="2.9" height="2.2" fill="#101070"/><rect x="3.50" y="13.40" width="2.9" height="2.2" fill="#d0b070"/><rect x="6.70" y="13.40" width="2.9" height="2.2" fill="#101070"/></svg>
<div class="t" style="left:153.1px;top:460px;font-family:'Liberation Sans', sans-serif;font-size:12px;line-height:12px;font-weight:normal;color:#3c3c3c;letter-spacing:0.14px">Cluster 1</div>
<svg style="position:absolute;left:137px;top:477px;" width="10" height="16" viewBox="0 0 10 16"><rect x="0" y="0" width="10" height="16" fill="#181838"/><rect x="0.30" y="0.40" width="2.9" height="2.2" fill="#901818"/><rect x="3.50" y="0.40" width="2.9" height="2.2" fill="#40b0b0"/><rect x="6.70" y="0.40" width="2.9" height="2.2" fill="#901818"/><rect x="0.30" y="3.00" width="2.9" height="2.2" fill="#40a040"/><rect x="3.50" y="3.00" width="2.9" height="2.2" fill="#b02040"/><rect x="6.70" y="3.00" width="2.9" height="2.2" fill="#40a040"/><rect x="0.30" y="5.60" width="2.9" height="2.2" fill="#2858b8"/><rect x="3.50" y="5.60" width="2.9" height="2.2" fill="#30a0c8"/><rect x="6.70" y="5.60" width="2.9" height="2.2" fill="#2858b8"/><rect x="0.30" y="8.20" width="2.9" height="2.2" fill="#b01828"/><rect x="3.50" y="8.20" width="2.9" height="2.2" fill="#c82838"/><rect x="6.70" y="8.20" width="2.9" height="2.2" fill="#b01828"/><rect x="0.30" y="10.80" width="2.9" height="2.2" fill="#1a1a90"/><rect x="3.50" y="10.80" width="2.9" height="2.2" fill="#a08030"/><rect x="6.70" y="10.80" width="2.9" height="2.2" fill="#1a1a90"/><rect x="0.30" y="13.40" width="2.9" height="2.2" fill="#101070"/><rect x="3.50" y="13.40" width="2.9" height="2.2" fill="#d0b070"/><rect x="6.70" y="13.40" width="2.9" height="2.2" fill="#101070"/></svg>
<div class="t" style="left:153.1px;top:480px;font-family:'Liberation Sans', sans-serif;font-size:12px;line-height:12px;font-weight:normal;color:#3c3c3c;letter-spacing:0.14px">Cluster 2</div>
<svg style="position:absolute;left:137px;top:497px;" width="10" height="16" viewBox="0 0 10 16"><rect x="0" y="0" width="10" height="16" fill="#181838"/><rect x="0.30" y="0.40" width="2.9" height="2.2" fill="#901818"/><rect x="3.50" y="0.40" width="2.9" height="2.2" fill="#40b0b0"/><rect x="6.70" y="0.40" width="2.9" height="2.2" fill="#901818"/><rect x="0.30" y="3.00" width="2.9" height="2.2" fill="#40a040"/><rect x="3.50" y="3.00" width="2.9" height="2.2" fill="#b02040"/><rect x="6.70" y="3.00" width="2.9" height="2.2" fill="#40a040"/><rect x="0.30" y="5.60" width="2.9" height="2.2" fill="#2858b8"/><rect x="3.50" y="5.60" width="2.9" height="2.2" fill="#30a0c8"/><rect x="6.70" y="5.60" width="2.9" height="2.2" fill="#2858b8"/><rect x="0.30" y="8.20" width="2.9" height="2.2" fill="#b01828"/><rect x="3.50" y="8.20" width="2.9" height="2.2" fill="#c82838"/><rect x="6.70" y="8.20" width="2.9" height="2.2" fill="#b01828"/><rect x="0.30" y="10.80" width="2.9" height="2.2" fill="#1a1a90"/><rect x="3.50" y="10.80" width="2.9" height="2.2" fill="#a08030"/><rect x="6.70" y="10.80" width="2.9" height="2.2" fill="#1a1a90"/><rect x="0.30" y="13.40" width="2.9" height="2.2" fill="#101070"/><rect x="3.50" y="13.40" width="2.9" height="2.2" fill="#d0b070"/><rect x="6.70" y="13.40" width="2.9" height="2.2" fill="#101070"/></svg>
<div class="t" style="left:153.1px;top:500px;font-family:'Liberation Sans', sans-serif;font-size:12px;line-height:12px;font-weight:normal;color:#3c3c3c;letter-spacing:0.14px">Cluster 3</div>
<svg style="position:absolute;left:94.5px;top:520px;" width="14" height="12" viewBox="0 0 14 12"><circle cx="5" cy="5" r="2.5" fill="#fff" stroke="#5c6c8c" stroke-width="1.7"/><rect x="7.5" y="4" width="4" height="2" fill="#5c6c8c"/><path d="M11.5 5.5 H13" stroke="#b4bccb" stroke-width="1"/></svg>
<svg style="position:absolute;left:114px;top:518px;" width="16" height="15" viewBox="0 0 16 15"><rect x="0.5" y="0.5" width="15" height="14" fill="#f8f2fa" stroke="#000" stroke-width="1.2"/><path d="M1 12.5 L8.5 6.5 L15 12" stroke="#b01848" stroke-width="1.3" fill="none"/><path d="M6.5 1.8 H10.5 M8.5 1.8 V10.5 M6.5 10.5 H10.5" stroke="#000" stroke-width="1"/><path d="M8.5 4.3 L10.3 6.3 L8.5 8.3 L6.7 6.3Z" fill="#1010a0"/></svg>
<div class="t" style="left:133.1px;top:520px;font-family:'Liberation Sans', sans-serif;font-size:12px;line-height:12px;font-weight:normal;color:#3c3c3c;letter-spacing:0.14px">Centroid Graphs</div>
<svg style="position:absolute;left:94.5px;top:540px;" width="14" height="12" viewBox="0 0 14 12"><circle cx="5" cy="5" r="2.5" fill="#fff" stroke="#5c6c8c" stroke-width="1.7"/><rect x="7.5" y="4" width="4" height="2" fill="#5c6c8c"/><path d="M11.5 5.5 H13" stroke="#b4bccb" stroke-width="1"/></svg>
<svg style="position:absolute;left:114px;top:538px;" width="16" height="15" viewBox="0 0 16 15"><rect x="0.5" y="0.5" width="15" height="14" fill="#fff" stroke="#000" stroke-width="1.2"/><path d="M1 7 L5.5 2.5 L9 6.5 L14.5 2.5" stroke="#b01838" stroke-width="1.2" fill="none"/><path d="M1 12.5 L5.5 8.5 L9 11.5 L14.5 8.5" stroke="#189018" stroke-width="1.2" fill="none"/></svg>
<div class="t" style="left:133.1px;top:540px;font-family:'Liberation Sans', sans-serif;font-size:12px;line-height:12px;font-weight:normal;color:#3c3c3c;letter-spacing:0.14px">Expression Graphs</div>
<svg style="position:absolute;left:115px;top:558px;" width="14" height="17" viewBox="0 0 14 17"><path d="M0.6 0.6 H9.6 L12.6 6.2 V15.4 H0.6Z" fill="#f8fbff" stroke="#2c3c84" stroke-width="1.1"/><path d="M9.2 1.5 L12 6" stroke="#2c3c84" stroke-width="0.9"/></svg>
<div class="t" style="left:131.0px;top:561px;font-family:'Liberation Sans', sans-serif;font-size:12px;line-height:12px;font-weight:normal;color:#3c3c3c;letter-spacing:0.14px">Selection Information</div>
<svg style="position:absolute;left:-5.5px;top:582px;" width="14" height="12" viewBox="0 0 14 12"><circle cx="5" cy="5" r="2.5" fill="#fff" stroke="#5c6c8c" stroke-width="1.7"/><rect x="4" y="7.5" width="2" height="3.5" fill="#5c6c8c"/><path d="M8 5.5 H13" stroke="#b4bccb" stroke-width="1"/></svg>
<svg style="position:absolute;left:14px;top:579px;" width="16" height="16" viewBox="0 0 16 16"><rect x="0.5" y="0.5" width="15" height="15" fill="#fff" stroke="#000" stroke-width="1.2"/><path d="M5 2.5 L2.8 4.5 L5 6.5 M11 2.5 L13.2 4.5 L11 6.5 M6.3 6.3 H9.7" stroke="#1a1a4a" stroke-width="1.3" fill="none"/><path transform="translate(2.5,7) scale(1.1,0.7)" d="M1.2 0.6 H3 V9.4 H1.2Z M7 0.6 H8.8 V9.4 H7Z M1.2 0.6 H3.2 L5 6.2 L6.8 0.6 H8.8 L5.6 9.2 H4.4Z M0 0 H3.4 V1.2 H0Z M6.6 0 H10 V1.2 H6.6Z M0 8.8 H4 V10 H0Z M6 8.8 H10 V10 H6Z" fill="#241c50"/></svg>
<div class="t" style="left:33.7px;top:582px;font-family:'Liberation Sans', sans-serif;font-size:12px;line-height:12px;font-weight:normal;color:#3c3c3c;letter-spacing:0.14px">Script Manager</div>
<svg style="position:absolute;left:34px;top:600px;" width="16" height="15" viewBox="0 0 16 15"><rect x="0" y="0" width="16" height="15" fill="#14146e"/><rect x="1" y="1" width="4" height="4" fill="#fff"/><rect x="2" y="2.0" width="2" height="2" fill="#b4b4e4"/><rect x="1" y="6" width="4" height="3" fill="#fff"/><rect x="2" y="6.5" width="2" height="2" fill="#b4b4e4"/><rect x="1" y="10" width="4" height="4" fill="#fff"/><rect x="2" y="11.0" width="2" height="2" fill="#b4b4e4"/><rect x="6" y="1" width="4" height="4" fill="#fff"/><rect x="7" y="2.0" width="2" height="2" fill="#b4b4e4"/><rect x="6" y="6" width="4" height="3" fill="#fff"/><rect x="7" y="6.5" width="2" height="2" fill="#b4b4e4"/><rect x="6" y="10" width="4" height="4" fill="#fff"/><rect x="7" y="11.0" width="2" height="2" fill="#b4b4e4"/><rect x="11" y="1" width="4" height="4" fill="#fff"/><rect x="12" y="2.0" width="2" height="2" fill="#b4b4e4"/><rect x="11" y="6" width="4" height="3" fill="#fff"/><rect x="12" y="6.5" width="2" height="2" fill="#b4b4e4"/><rect x="11" y="10" width="4" height="4" fill="#fff"/><rect x="12" y="11.0" width="2" height="2" fill="#b4b4e4"/></svg>
<div class="t" style="left:53.300000000000004px;top:602px;font-family:'Liberation Sans', sans-serif;font-size:12px;line-height:12px;font-weight:normal;color:#3c3c3c;letter-spacing:0.14px">Script Table</div>
<svg style="position:absolute;left:14.5px;top:622px;" width="14" height="12" viewBox="0 0 14 12"><circle cx="5" cy="5" r="2.5" fill="#fff" stroke="#5c6c8c" stroke-width="1.7"/><rect x="4" y="7.5" width="2" height="3.5" fill="#5c6c8c"/><path d="M8 5.5 H13" stroke="#b4bccb" stroke-width="1"/></svg>
<svg style="position:absolute;left:35px;top:620px;" width="16" height="15" viewBox="0 0 16 15"><path d="M3 0.6 H14.5 V3 L13 3.5 V11 H4 L3 8 L4 5 L2.5 2Z" fill="#b4aed0" stroke="#3a3a4a" stroke-width="0.9"/><path d="M0.8 11 H14 V13.5 H1.5Z" fill="#c8c4dc" stroke="#3a3a4a" stroke-width="0.9"/><rect x="12.5" y="0.5" width="2.2" height="2.2" fill="#101010"/><rect x="12" y="11.3" width="2.2" height="2.2" fill="#101010"/><path d="M5 4 H11 M6 6.5 H11 M5 9 H11" stroke="#9a92b8" stroke-width="0.8"/></svg>
<div class="t" style="left:53.300000000000004px;top:622px;font-family:'Liberation Sans', sans-serif;font-size:12px;line-height:12px;font-weight:normal;color:#3c3c3c;letter-spacing:0.14px">Script (1)</div>
<svg style="position:absolute;left:53px;top:638px;" width="18" height="18" viewBox="0 0 18 18"><rect x="0.5" y="0.5" width="17" height="17" fill="#f6f8d8" stroke="#000" stroke-width="1.2"/><rect x="3" y="2.5" width="6" height="2" fill="#1a5a1a"/><path d="M3.5 4 V7.5 H7 V14.5 H9" stroke="#000" stroke-width="1.1" fill="none"/><rect x="6.5" y="6.5" width="5.5" height="2.2" fill="#d0d8f4" stroke="#10105a" stroke-width="0.9"/><path d="M7 10.5 H9" stroke="#000" stroke-width="1.1"/><rect x="9" y="9" width="6" height="3" fill="#1f8a1f"/><rect x="9" y="13" width="6" height="3" fill="#1f8a1f"/></svg>
<div class="t" style="left:73.10000000000001px;top:642px;font-family:'Liberation Sans', sans-serif;font-size:12px;line-height:12px;font-weight:normal;color:#3c3c3c;letter-spacing:0.14px">Script Tree Viewer</div>
<svg style="position:absolute;left:53px;top:658px;" width="18" height="18" viewBox="0 0 18 18"><rect x="0.5" y="0.5" width="17" height="17" fill="#f6f8d8" stroke="#000" stroke-width="1.2"/><path d="M6 3 L3.5 5.3 L6 7.5 M12 3 L14.5 5.3 L12 7.5 M9 11 L6.5 13 L9 15" stroke="#2a2a8a" stroke-width="1.4" fill="none"/><rect x="8.5" y="6.5" width="1" height="1" fill="#2a2a8a"/><rect x="11" y="14" width="1.2" height="1.2" fill="#2a2a8a"/><rect x="13.5" y="14" width="1.2" height="1.2" fill="#2a2a8a"/></svg>
<div class="t" style="left:73.10000000000001px;top:662px;font-family:'Liberation Sans', sans-serif;font-size:12px;line-height:12px;font-weight:normal;color:#3c3c3c;letter-spacing:0.14px">Script XML Viewer</div>
<svg style="position:absolute;left:-5.5px;top:682px;" width="14" height="12" viewBox="0 0 14 12"><circle cx="5" cy="5" r="2.5" fill="#fff" stroke="#5c6c8c" stroke-width="1.7"/><rect x="7.5" y="4" width="4" height="2" fill="#5c6c8c"/><path d="M11.5 5.5 H13" stroke="#b4bccb" stroke-width="1"/></svg>
<svg style="position:absolute;left:15px;top:680px;" width="16" height="16" viewBox="0 0 16 16"><path d="M2.5 0.6 H14 V3 L12.5 3.5 V11.5 H3.5 L3 8 L4 5 L2 2Z" fill="#f6d8d0" stroke="#4a2a20" stroke-width="0.9"/><path d="M0.6 11.5 H13 V14.2 H1Z" fill="#fae8e2" stroke="#4a2a20" stroke-width="0.9"/><rect x="12" y="0.5" width="2.2" height="2.2" fill="#101010"/><rect x="11" y="11.8" width="2" height="2" fill="#101010"/><path d="M5 3.5 H10 M6 6.5 H10 M5 9 H11" stroke="#b08880" stroke-width="0.7" stroke-dasharray="1 1"/></svg>
<div class="t" style="left:33.2px;top:682px;font-family:'Liberation Sans', sans-serif;font-size:12px;line-height:12px;font-weight:normal;color:#3c3c3c;letter-spacing:0.14px">History</div>
<svg style="position:absolute;left:-3px;top:89px;" width="34" height="22" viewBox="0 0 34 22"><rect x="0.5" y="1.5" width="32" height="19" fill="#fff" stroke="#000" stroke-width="1.2"/><text x="0" y="15.6" font-family="Liberation Sans" font-style="italic" font-size="17" fill="#1e1e48" letter-spacing="-2.2">MeV</text><circle cx="22" cy="17" r="2" fill="#c01818"/><circle cx="29.5" cy="8.5" r="1.5" fill="#c8c820"/><path d="M23 17.5 L29 17" stroke="#8aa0d0" stroke-width="1"/><path d="M28 17 L30.5 15 L31 18.5Z" fill="#101010"/></svg>
<div class="t" style="left:652px;top:102px;font-family:'Liberation Serif', serif;font-size:18px;line-height:18px;font-weight:bold;color:#0a0a70;">Cluster Selection Information</div>
<div class="t" style="left:278px;top:160px;font-family:'Liberation Serif', serif;font-size:18px;line-height:18px;font-weight:normal;color:#000;letter-spacing:-0.05px">Number of Desired Clusters: 3</div>
<div class="t" style="left:278px;top:184px;font-family:'Liberation Serif', serif;font-size:18px;line-height:18px;font-weight:normal;color:#000;letter-spacing:-0.16px">Minimum Cluster Size (population): 10</div>
<div class="t" style="left:278px;top:208px;font-family:'Liberation Serif', serif;font-size:18px;line-height:18px;font-weight:normal;color:#000;letter-spacing:-0.06px">Diversity Measurement: Intra-gene Based Diversity (mean gene-to-gene dist.)</div>
<div class="t" style="left:278px;top:280px;font-family:'Liberation Serif', serif;font-size:18px;line-height:18px;font-weight:normal;color:#000;letter-spacing:0.04px">Note: Clusters are sorted by diversity. Selected clusters are in <b>bold</b> type.</div>
<div class="t" style="left:219.5px;width:200px;text-align:center;top:313px;font-family:'Liberation Serif', serif;font-size:14px;line-height:14px;font-weight:bold;color:#000;text-decoration:underline;letter-spacing:0.3px">Div. Rank</div>
<div class="t" style="left:306.5px;width:200px;text-align:center;top:313px;font-family:'Liberation Serif', serif;font-size:14px;line-height:14px;font-weight:bold;color:#000;text-decoration:underline;letter-spacing:0.1px">Diversity</div>
<div class="t" style="left:395.5px;width:200px;text-align:center;top:313px;font-family:'Liberation Serif', serif;font-size:14px;line-height:14px;font-weight:bold;color:#000;text-decoration:underline;letter-spacing:0px">Population</div>
<div class="t" style="left:219.5px;width:200px;text-align:center;top:352px;font-family:'Liberation Serif', serif;font-size:14px;line-height:14px;font-weight:bold;color:#000;">1</div>
<div class="t" style="left:306.5px;width:200px;text-align:center;top:352px;font-family:'Liberation Serif', serif;font-size:14px;line-height:14px;font-weight:bold;color:#000;">-0.5930133</div>
<div class="t" style="left:395.5px;width:200px;text-align:center;top:352px;font-family:'Liberation Serif', serif;font-size:14px;line-height:14px;font-weight:bold;color:#000;">133</div>
<div class="t" style="left:219.5px;width:200px;text-align:center;top:391px;font-family:'Liberation Serif', serif;font-size:14px;line-height:14px;font-weight:bold;color:#000;">2</div>
<div class="t" style="left:306.5px;width:200px;text-align:center;top:391px;font-family:'Liberation Serif', serif;font-size:14px;line-height:14px;font-weight:bold;color:#000;">-0.5798908</div>
<div class="t" style="left:395.5px;width:200px;text-align:center;top:391px;font-family:'Liberation Serif', serif;font-size:14px;line-height:14px;font-weight:bold;color:#000;">73</div>
<div class="t" style="left:219.5px;width:200px;text-align:center;top:430px;font-family:'Liberation Serif', serif;font-size:14px;line-height:14px;font-weight:bold;color:#000;">3</div>
<div class="t" style="left:306.5px;width:200px;text-align:center;top:430px;font-family:'Liberation Serif', serif;font-size:14px;line-height:14px;font-weight:bold;color:#000;">-0.51622856</div>
<div class="t" style="left:395.5px;width:200px;text-align:center;top:430px;font-family:'Liberation Serif', serif;font-size:14px;line-height:14px;font-weight:bold;color:#000;">81</div>
<div class="t" style="left:219.5px;width:200px;text-align:center;top:469px;font-family:'Liberation Serif', serif;font-size:14px;line-height:14px;font-weight:normal;color:#000;">4</div>
<div class="t" style="left:306.5px;width:200px;text-align:center;top:469px;font-family:'Liberation Serif', serif;font-size:14px;line-height:14px;font-weight:normal;color:#000;">-0.4963723</div>
<div class="t" style="left:395.5px;width:200px;text-align:center;top:469px;font-family:'Liberation Serif', serif;font-size:14px;line-height:14px;font-weight:normal;color:#000;">79</div>
<div class="t" style="left:219.5px;width:200px;text-align:center;top:508px;font-family:'Liberation Serif', serif;font-size:14px;line-height:14px;font-weight:normal;color:#000;">5</div>
<div class="t" style="left:306.5px;width:200px;text-align:center;top:508px;font-family:'Liberation Serif', serif;font-size:14px;line-height:14px;font-weight:normal;color:#000;">-0.45251837</div>
<div class="t" style="left:395.5px;width:200px;text-align:center;top:508px;font-family:'Liberation Serif', serif;font-size:14px;line-height:14px;font-weight:normal;color:#000;">261</div>
<div class="t" style="left:219.5px;width:200px;text-align:center;top:547px;font-family:'Liberation Serif', serif;font-size:14px;line-height:14px;font-weight:normal;color:#000;">6</div>
<div class="t" style="left:306.5px;width:200px;text-align:center;top:547px;font-family:'Liberation Serif', serif;font-size:14px;line-height:14px;font-weight:normal;color:#000;">-0.45131332</div>
<div class="t" style="left:395.5px;width:200px;text-align:center;top:547px;font-family:'Liberation Serif', serif;font-size:14px;line-height:14px;font-weight:normal;color:#000;">60</div>
<div class="t" style="left:219.5px;width:200px;text-align:center;top:586px;font-family:'Liberation Serif', serif;font-size:14px;line-height:14px;font-weight:normal;color:#000;">7</div>
<div class="t" style="left:306.5px;width:200px;text-align:center;top:586px;font-family:'Liberation Serif', serif;font-size:14px;line-height:14px;font-weight:normal;color:#000;">-0.44312665</div>
<div class="t" style="left:395.5px;width:200px;text-align:center;top:586px;font-family:'Liberation Serif', serif;font-size:14px;line-height:14px;font-weight:normal;color:#000;">125</div>
<div class="t" style="left:219.5px;width:200px;text-align:center;top:625px;font-family:'Liberation Serif', serif;font-size:14px;line-height:14px;font-weight:normal;color:#000;">8</div>
<div class="t" style="left:306.5px;width:200px;text-align:center;top:625px;font-family:'Liberation Serif', serif;font-size:14px;line-height:14px;font-weight:normal;color:#000;">-0.43834218</div>
<div class="t" style="left:395.5px;width:200px;text-align:center;top:625px;font-family:'Liberation Serif', serif;font-size:14px;line-height:14px;font-weight:normal;color:#000;">98</div>
<div class="t" style="left:219.5px;width:200px;text-align:center;top:664px;font-family:'Liberation Serif', serif;font-size:14px;line-height:14px;font-weight:normal;color:#000;">9</div>
<div class="t" style="left:306.5px;width:200px;text-align:center;top:664px;font-family:'Liberation Serif', serif;font-size:14px;line-height:14px;font-weight:normal;color:#000;">-0.4362248</div>
<div class="t" style="left:395.5px;width:200px;text-align:center;top:664px;font-family:'Liberation Serif', serif;font-size:14px;line-height:14px;font-weight:normal;color:#000;">134</div>
<div class="t" style="left:219.5px;width:200px;text-align:center;top:703px;font-family:'Liberation Serif', serif;font-size:14px;line-height:14px;font-weight:normal;color:#000;">10</div>
<div class="t" style="left:306.5px;width:200px;text-align:center;top:703px;font-family:'Liberation Serif', serif;font-size:14px;line-height:14px;font-weight:normal;color:#000;">-0.4082971</div>
<div class="t" style="left:395.5px;width:200px;text-align:center;top:703px;font-family:'Liberation Serif', serif;font-size:14px;line-height:14px;font-weight:normal;color:#000;">70</div>
</body></html>
